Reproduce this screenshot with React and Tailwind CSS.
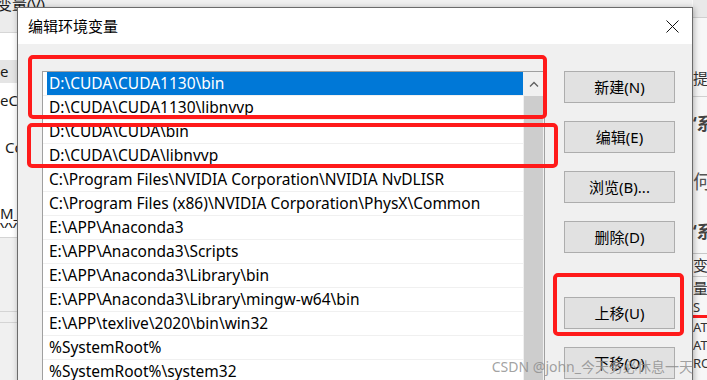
const PATHS = [
  'D:\\CUDA\\CUDA1130\\bin',
  'D:\\CUDA\\CUDA1130\\libnvvp',
  'D:\\CUDA\\CUDA\\bin',
  'D:\\CUDA\\CUDA\\libnvvp',
  'C:\\Program Files\\NVIDIA Corporation\\NVIDIA NvDLISR',
  'C:\\Program Files (x86)\\NVIDIA Corporation\\PhysX\\Common',
  'E:\\APP\\Anaconda3',
  'E:\\APP\\Anaconda3\\Scripts',
  'E:\\APP\\Anaconda3\\Library\\bin',
  'E:\\APP\\Anaconda3\\Library\\mingw-w64\\bin',
  'E:\\APP\\texlive\\2020\\bin\\win32',
  '%SystemRoot%',
  '%SystemRoot%\\system32',
]

const FONT = "font-['Noto_Sans','Noto_Sans_CJK_SC',sans-serif]"

function WinButton({ children, className = '' }) {
  return (
    <button
      type="button"
      className={`flex h-[32px] w-[111px] shrink-0 items-center justify-center border border-[#adadad] bg-[#e1e1e1] text-[15px] text-black ${className}`}
    >
      {children}
    </button>
  )
}

function LeftBackdrop() {
  return (
    <div className="flex w-[60px] flex-col overflow-hidden text-[15px] leading-[15px] text-[#1a1a1a]">
      <div className="h-[33px] shrink-0 border-b border-[#d6d6d6] bg-[#ececec]">
        <div className="-mt-[3px] -ml-[3px] whitespace-nowrap">变量(V)</div>
      </div>
      <div className="h-[27px] shrink-0 bg-white"></div>
      <div className="flex h-[23px] shrink-0 items-center bg-[#e5e5e5]">e</div>
      <div className="flex h-[34px] shrink-0 items-center bg-white">eCo</div>
      <div className="flex h-[60px] shrink-0 items-center bg-white pl-[5px]">Co</div>
      <div className="h-[60px] shrink-0 overflow-hidden bg-white pt-[29px] leading-[14px]">
        <div>M_I</div>
        <div className="h-[8px] overflow-hidden">YY</div>
      </div>
      <div className="h-[75px] shrink-0 border-b border-t border-[#d4d4d4] bg-[#f0f0f0]"></div>
      <div className="h-[11px] shrink-0 border-b border-[#d4d4d4] bg-[#f0f0f0]"></div>
      <div className="flex-1 bg-[#f0f0f0]"></div>
    </div>
  )
}

function RightBackdrop() {
  return (
    <div className="flex w-[15px] flex-col overflow-hidden bg-[#f7f7f7] pl-[1px] text-[15px] leading-[15px] text-[#333]">
      <div className="h-[18px] shrink-0 border-b border-[#cfcfcf] bg-[#e9e9e9]"></div>
      <div className="flex h-[78px] shrink-0 items-end pb-[10px]">提</div>
      <div className="shrink-0 border-t border-[#d0d0d0]"></div>
      <div className="flex h-[40px] shrink-0 items-end pb-[6px] text-[17px] font-bold text-[#444]">‘系</div>
      <div className="flex h-[72px] shrink-0 items-center pt-[18px] text-[19px] text-[#555]">何</div>
      <div className="flex h-[44px] shrink-0 items-center text-[17px] font-bold text-[#444]">‘系</div>
      <div className="shrink-0 border-t border-[#c8c8c8]"></div>
      <div className="flex h-[22px] shrink-0 items-center">变</div>
      <div className="shrink-0 border-t border-[#c8c8c8]"></div>
      <div className="flex h-[22px] shrink-0 items-center">量</div>
      <div className="flex h-[16px] shrink-0 items-center text-[13px]">S</div>
      <div className="h-[3px] shrink-0 bg-[#ff1a1a]"></div>
      <div className="flex h-[18px] shrink-0 items-center text-[13px]">ATI</div>
      <div className="flex h-[19px] shrink-0 items-center text-[13px]">ATI</div>
      <div className="flex h-[16px] shrink-0 items-center text-[13px]">RO</div>
    </div>
  )
}

export default function App() {
  return (
    <div className={`relative h-[380px] w-[707px] overflow-hidden bg-[#f0f0f0] ${FONT}`}>
      <div className="flex h-full justify-between">
        <LeftBackdrop />
        <RightBackdrop />
      </div>

      <div className="absolute left-[17px] top-[7px] flex h-[400px] w-[676px] flex-col overflow-hidden border border-[#6b6b6b] bg-[#f0f0f0] shadow-[1px_1px_6px_rgba(0,0,0,0.3)]">
        <div className="flex h-[36px] shrink-0 items-center justify-between bg-white pl-[10px] pr-[13px]">
          <span className="text-[15px] text-black">编辑环境变量</span>
          <svg width="13" height="13" viewBox="0 0 13 13" fill="none" stroke="#111" strokeWidth="1">
            <path d="M0.5 0.5 L12.5 12.5 M12.5 0.5 L0.5 12.5" />
          </svg>
        </div>

        <div className="flex shrink-0 gap-[19px] pl-[24px] pt-[27px]">
          <div className="flex h-[330px] w-[503px] shrink-0 border border-[#a0a0a0] bg-white">
            <div className="flex-1 text-[15.5px] text-black">
              {PATHS.map((p, i) => (
                <div key={p} className="h-[24px] border-b border-[#f0f0f0] pl-[4px]">
                  <div
                    className={`flex h-full items-center whitespace-nowrap pl-[2px] ${
                      i === 0 ? 'bg-[#0078d7] text-white' : ''
                    }`}
                  >
                    {p}
                  </div>
                </div>
              ))}
            </div>
            <div className="flex w-[21px] flex-col bg-[#f0f0f0]">
              <div className="flex h-[24px] items-center justify-center">
                <svg width="10" height="6" viewBox="0 0 10 6" fill="none" stroke="#606060" strokeWidth="1.3">
                  <path d="M1 5.5 L5 1.5 L9 5.5" />
                </svg>
              </div>
              <div className="mx-px flex-1 bg-[#cdcdcd]"></div>
            </div>
          </div>

          <div className="flex flex-col gap-[18px]">
            <WinButton>新建(N)</WinButton>
            <WinButton>编辑(E)</WinButton>
            <WinButton>浏览(B)...</WinButton>
            <WinButton>删除(D)</WinButton>
            <WinButton className="mt-[26px]">上移(U)</WinButton>
            <WinButton>下移(O)</WinButton>
          </div>
        </div>
      </div>

      <div className="absolute left-[28px] top-[55px] h-[64px] w-[519px] rounded-[5px] border-[4px] border-[#ff1a1a]"></div>
      <div className="absolute left-[27px] top-[123px] h-[45px] w-[531px] rounded-[5px] border-[4px] border-[#ff1a1a]"></div>
      <div className="absolute left-[553px] top-[273px] h-[63px] w-[131px] rounded-[5px] border-[4px] border-[#ff1a1a]"></div>

      <div className="absolute bottom-[5px] right-[14px] whitespace-nowrap text-[14px] leading-[16px] text-[#8a8a8a]/80">
        CSDN @john_今天务必休息一天
      </div>
    </div>
  )
}
